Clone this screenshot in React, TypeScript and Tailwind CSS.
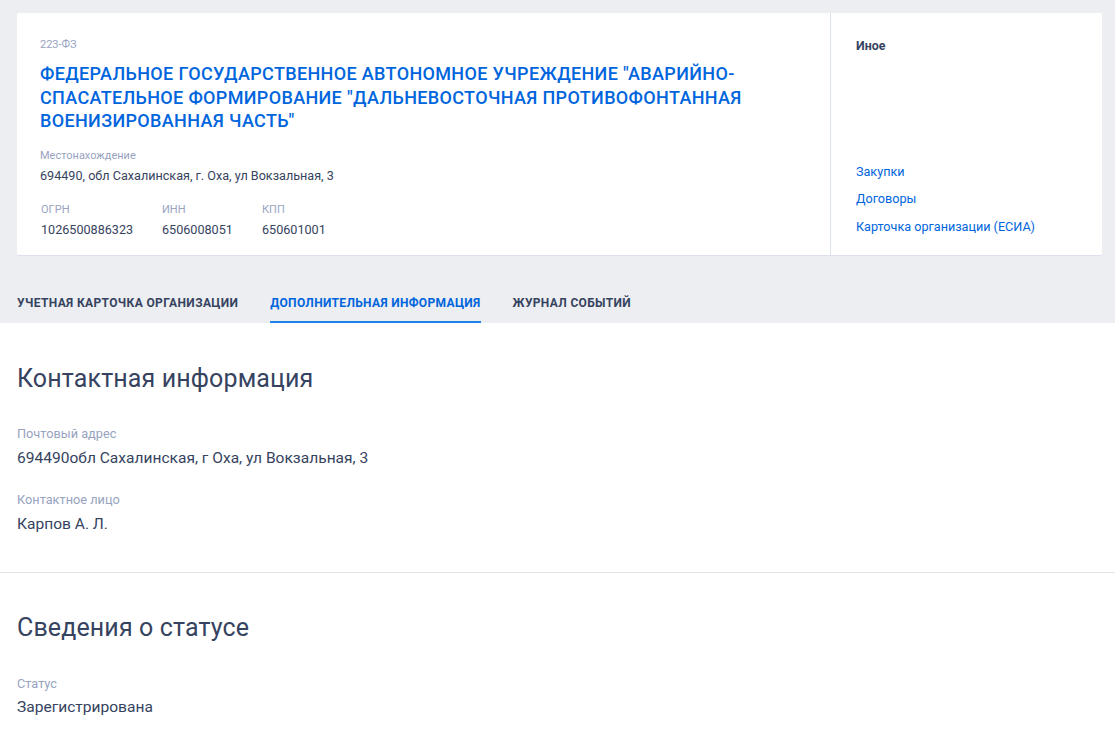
export default function App() {
  return (
    <div className="h-[737px] overflow-hidden bg-white font-['Roboto',sans-serif] text-[#364360]">
      <div className="h-[323px] bg-[#eceef1] bg-[radial-gradient(#f7f8fa_0.5px,transparent_0.7px)] bg-[length:4px_4px] pt-[13px]">
        <div className="ml-[17px] mr-[13px] flex h-[243px] rounded-[2px] border-b border-[#dbe0ec] bg-white">
          <div className="w-[814px] border-r border-[#dde3ee] pl-[23px] pt-[25px]">
            <div className="text-[11px] leading-[13px] text-[#98a3bf]">223-ФЗ</div>
            <h1 className="mt-[11px] w-[760px] text-[18px] font-medium leading-[23.5px] tracking-[0.35px] text-[#0065dd]">
              ФЕДЕРАЛЬНОЕ ГОСУДАРСТВЕННОЕ АВТОНОМНОЕ УЧРЕЖДЕНИЕ "АВАРИЙНО-СПАСАТЕЛЬНОЕ ФОРМИРОВАНИЕ "ДАЛЬНЕВОСТОЧНАЯ ПРОТИВОФОНТАННАЯ ВОЕНИЗИРОВАННАЯ ЧАСТЬ"
            </h1>
            <div className="mt-[16px] text-[11px] leading-[13px] text-[#98a3bf]">Местонахождение</div>
            <div className="mt-[6px] text-[12.62px] leading-[16px]">694490, обл Сахалинская, г. Оха, ул Вокзальная, 3</div>
            <div className="mt-[19px] flex pl-px">
              <div className="w-[121px]">
                <div className="text-[11px] leading-[13px] text-[#98a3bf]">ОГРН</div>
                <div className="mt-[6.5px] text-[12.62px] leading-[16px]">1026500886323</div>
              </div>
              <div className="w-[100px]">
                <div className="text-[11px] leading-[13px] text-[#98a3bf]">ИНН</div>
                <div className="mt-[6.5px] text-[12.62px] leading-[16px]">6506008051</div>
              </div>
              <div>
                <div className="text-[11px] leading-[13px] text-[#98a3bf]">КПП</div>
                <div className="mt-[6.5px] text-[12.62px] leading-[16px]">650601001</div>
              </div>
            </div>
          </div>
          <div className="flex flex-1 flex-col pl-[25px] pt-[25px]">
            <div className="text-[12.4px] font-bold leading-[16px]">Иное</div>
            <div className="mt-[110px] flex flex-col gap-[11.3px] text-[12.62px] leading-[16px] text-[#0065dd]">
              <a>Закупки</a>
              <a>Договоры</a>
              <a>Карточка организации (ЕСИА)</a>
            </div>
          </div>
        </div>
        <div className="mt-[33px] flex h-[34px] gap-[32px] pl-[17px] text-[12px] font-bold leading-[28px] tracking-[0.34px]">
          <div className="tracking-[0.37px]">УЧЕТНАЯ КАРТОЧКА ОРГАНИЗАЦИИ</div>
          <div className="h-[34px] border-b-2 border-[#1e82e6] text-[#0065dd]">ДОПОЛНИТЕЛЬНАЯ ИНФОРМАЦИЯ</div>
          <div>ЖУРНАЛ СОБЫТИЙ</div>
        </div>
      </div>
      <section className="h-[250px] border-b border-[#e0e3e8] px-[17px] pt-[40px]">
        <h2 className="text-[25px] leading-[32px] tracking-[0.13px]">Контактная информация</h2>
        <div className="mt-[31px] text-[12.75px] leading-[16px] text-[#98a3bf]">Почтовый адрес</div>
        <div className="mt-[5px] text-[15.55px] leading-[22px]">694490обл Сахалинская, г Оха, ул Вокзальная, 3</div>
        <div className="mt-[23px] text-[12.75px] leading-[16px] text-[#98a3bf]">Контактное лицо</div>
        <div className="mt-[5px] text-[15.55px] leading-[22px]">Карпов А. Л.</div>
      </section>
      <section className="px-[17px] pt-[39px]">
        <h2 className="text-[25px] leading-[32px] tracking-[0.13px]">Сведения о статусе</h2>
        <div className="mt-[32px] text-[12.75px] leading-[16px] text-[#98a3bf]">Статус</div>
        <div className="mt-[4px] text-[15.55px] leading-[22px]">Зарегистрирована</div>
      </section>
    </div>
  );
}
